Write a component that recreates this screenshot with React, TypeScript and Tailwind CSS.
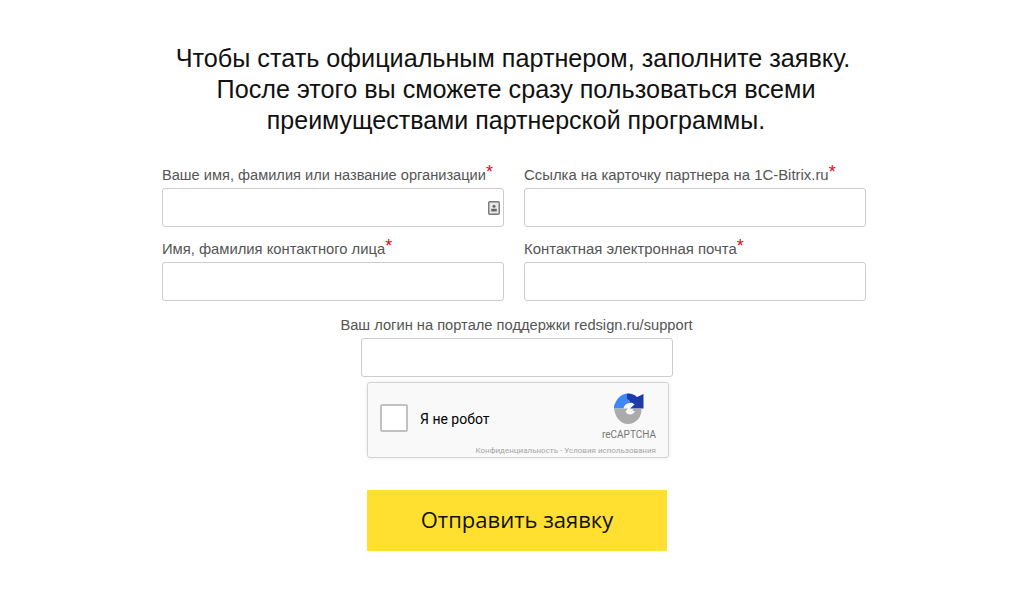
import React from "react";

function Field({ label, size, icon }: { label: string; size: string; icon?: boolean }) {
  return (
    <div className="flex flex-col">
      <div className={"h-[26px] pt-[1px] leading-[24px] text-[#555] whitespace-nowrap " + size}>
        {label}
        <span className="relative top-[-2px] text-[18px] leading-none text-[#e30613]">*</span>
      </div>
      <div className="relative h-[39px] rounded-[3px] border border-[#ccc] bg-white">
        {icon && (
          <svg className="absolute right-[3px] top-[12px]" width="12" height="14" viewBox="0 0 12 14">
            <rect x="0.75" y="0.75" width="10.5" height="12.5" rx="1.2" fill="#e9e9e9" stroke="#777" strokeWidth="1.4" />
            <circle cx="6" cy="5.2" r="1.5" fill="#666" />
            <rect x="3.2" y="7.8" width="5.6" height="2.6" fill="#666" />
          </svg>
        )}
      </div>
    </div>
  );
}

function RecaptchaLogo() {
  return (
    <svg width="30" height="31" viewBox="0 0 30 31">
      <path d="M13 0.5 C17 0 20.5 1.5 23 4 L29.5 1 V15.5 H16 L20.5 11.5 C19 10 17.5 9.5 16 10 C16 8 14 6.5 13 6.5 Z" fill="#1c3aa9" />
      <path d="M13 0.5 C7 1 2.5 6 0 13 V15.5 H9.5 C10 13 11.5 11 13.5 10.5 L16 10 C16 8 14 6.5 13 6.5 Z" fill="#4285f4" />
      <path d="M0 15.5 H14 L11.5 18.5 C12.5 20.5 14 21.5 16 21.5 C18 21.5 19.5 20.5 21 18.5 L18.5 17.5 C18.5 16.5 19.5 15.5 21 15.5 H27.5 C28 24 22 31 14 31 C6.5 31 1 24 0 15.5 Z" fill="#ababab" />
    </svg>
  );
}

export default function App() {
  return (
    <div className="flex h-[600px] w-[1024px] flex-col items-center overflow-hidden bg-white pt-[43px] font-['Liberation_Sans',Arial,sans-serif]">
      <h1 className="ml-[8px] w-[720px] text-center text-[25.2px] leading-[31px] font-normal text-[#111]">
        <span className="mr-[6px]">Чтобы стать официальным партнером, заполните заявку.</span>
        <br />
        После этого вы сможете сразу пользоваться всеми
        <br />
        <span className="text-[25px]">преимуществами партнерской программы.</span>
      </h1>
      <div className="mt-[26px] ml-[4px] grid w-[704px] grid-cols-2 gap-x-[20px] gap-y-[9px]">
        <Field label="Ваше имя, фамилия или название организации" size="text-[14.62px]" icon />
        <Field label="Ссылка на карточку партнера на 1С-Bitrix.ru" size="text-[14.9px]" />
        <Field label="Имя, фамилия контактного лица" size="text-[14.78px]" />
        <Field label="Контактная электронная почта" size="text-[14.93px]" />
      </div>
      <div className="mt-[12px] ml-[9px] text-center text-[14.68px] leading-[25px] text-[#555]">
        Ваш логин на портале поддержки redsign.ru/support
      </div>
      <div className="ml-[10px] h-[39px] w-[312px] rounded-[3px] border border-[#ccc] bg-white" />
      <div className="mt-[5px] ml-[12px] flex h-[76px] w-[302px] items-start justify-between rounded-[3px] border border-[#d3d3d3] bg-[#f9f9f9] shadow-[0_0_4px_rgba(0,0,0,0.08)]">
        <div className="mt-[21px] ml-[12px] flex items-center font-['Roboto',sans-serif]">
          <div className="h-[28px] w-[28px] shrink-0 rounded-[2px] border-2 border-[#c1c1c1] bg-white" />
          <span className="ml-[12px] pt-[2px] whitespace-nowrap text-[14px] text-black">Я не робот</span>
        </div>
        <div className="mr-[12px] flex w-[60px] shrink-0 flex-col items-end font-['Roboto',sans-serif]">
          <div className="mt-[10px] mr-[12px] h-[31px] w-[30px]"><RecaptchaLogo /></div>
          <div className="mt-[5px] text-[10px] leading-[12px] text-[#777]">reCAPTCHA</div>
          <div className="mt-[5px] shrink-0 text-[8px] leading-[10px] text-[#a6a6a6] whitespace-nowrap">Конфиденциальность - Условия использования</div>
        </div>
      </div>
      <button className="mt-[32px] ml-[10px] h-[61px] w-[300px] bg-[#ffe030] pb-[2px] font-['Open_Sans',sans-serif] text-[22px] text-[#111]">
        Отправить заявку
      </button>
    </div>
  );
}
